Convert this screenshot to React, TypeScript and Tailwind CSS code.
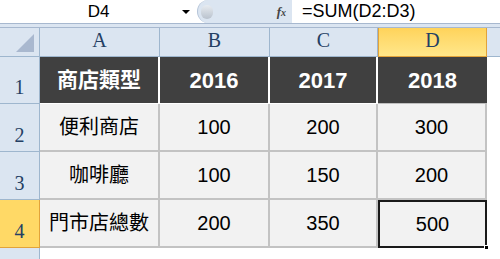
import React from "react";

const cols = ["A", "B", "C", "D"];

const rows = [
  { n: "1", cells: ["商店類型", "2016", "2017", "2018"], head: true },
  { n: "2", cells: ["便利商店", "100", "200", "300"] },
  { n: "3", cells: ["咖啡廳", "100", "150", "200"] },
  { n: "4", cells: ["門市店總數", "200", "350", "500"], active: true },
];

const serif = "font-['Liberation_Serif',serif]";
const sans = "font-['Liberation_Sans','Noto_Sans_CJK_TC',sans-serif]";

const App = () => {
  return (
    <div className="w-[500px] h-[259px] overflow-hidden bg-white">
      {/* formula bar */}
      <div className="flex h-[24px] border-b border-[#a7b8cf] bg-white">
        <div className="relative w-[197px] flex items-center justify-center">
          <span className={`${sans} text-[17px] text-black`}>D4</span>
          <span className="absolute right-[7px] top-[10px] w-0 h-0 border-l-[4px] border-r-[4px] border-t-[4px] border-l-transparent border-r-transparent border-t-black"></span>
        </div>
        <div className="w-[95px] flex items-center bg-[#dbe5f1] rounded-l-[12px] border-l border-[#b5c4d8]">
          <div className="ml-[3px] w-[12px] h-[14px] rounded-full bg-gradient-to-b from-[#e8ecf1] to-[#b9c2cd]"></div>
          <span className={`${serif} ml-auto mr-[6px] italic font-bold text-[13px] text-[#444]`}>
            f<span className="text-[10px]">x</span>
          </span>
        </div>
        <div className="flex-1 flex items-center pl-[10px]">
          <span className={`${sans} text-[18px] text-black`}>=SUM(D2:D3)</span>
        </div>
      </div>
      <div className="h-[4px] bg-[#dbe5f1] border-b border-[#a7b8cf]"></div>

      {/* sheet */}
      <div className="grid grid-cols-[40px_120px_110px_108px_109px_1fr] grid-rows-[29px_47px_48px_48px_48px_11px]">
        <div className="relative bg-[#dbe5f1] border-r border-b border-[#9eb6ce]">
          <svg className="absolute right-[5px] bottom-[4px]" width="18" height="18">
            <polygon points="18,0 18,18 0,18" fill="#a9b8cf" />
          </svg>
        </div>
        {cols.map((c) =>
          c === "D" ? (
            <div
              key={c}
              className={`${serif} flex items-end justify-center pb-[1px] text-[20px] text-[#243f64] bg-gradient-to-b from-[#ffd35a] to-[#ffe78a] border-x border-b border-[#e2a33a]`}
            >
              {c}
            </div>
          ) : (
            <div
              key={c}
              className={`${serif} flex items-end justify-center pb-[1px] text-[20px] text-[#243f64] bg-[#dbe5f1] border-r border-b border-[#9eb6ce]`}
            >
              {c}
            </div>
          )
        )}
        <div className="bg-[#dbe5f1] border-b border-[#9eb6ce]"></div>

        {rows.map((r) => (
          <React.Fragment key={r.n}>
            <div
              className={`${serif} flex items-end justify-center pb-[1px] text-[20px] text-[#243f64] border-r border-b ${
                r.active
                  ? "bg-[#ffd966] border-[#e2a33a]"
                  : "bg-[#dbe5f1] border-[#9eb6ce]"
              }`}
            >
              {r.n}
            </div>
            {r.cells.map((v, i) => {
              if (r.head) {
                return (
                  <div
                    key={i}
                    className={`${sans} flex items-center justify-center bg-[#404040] text-white font-bold ${
                      i === 0 ? "text-[21px]" : "text-[22px]"
                    } ${i < 3 ? "border-r-2 border-white" : ""} border-b border-[#bfbfbf]`}
                  >
                    {v}
                  </div>
                );
              }
              const selected = r.active && i === 3;
              return (
                <div
                  key={i}
                  className={`${sans} relative flex items-center justify-center bg-[#f2f2f2] text-black ${
                    i === 0 ? "text-[20px]" : "text-[20px]"
                  } ${
                    selected
                      ? "border-2 border-[#1a1a1a]"
                      : "border-r-2 border-b-2 border-[#c3c3c3]"
                  }`}
                >
                  {v}
                  {selected && (
                    <span className="absolute -right-[4px] -bottom-[4px] w-[5px] h-[5px] bg-black border border-white"></span>
                  )}
                </div>
              );
            })}
            <div className="bg-white"></div>
          </React.Fragment>
        ))}

        <div className="bg-[#dbe5f1] border-r border-[#9eb6ce]"></div>
        <div className="col-span-5 bg-white"></div>
      </div>
    </div>
  );
};

export default App;
